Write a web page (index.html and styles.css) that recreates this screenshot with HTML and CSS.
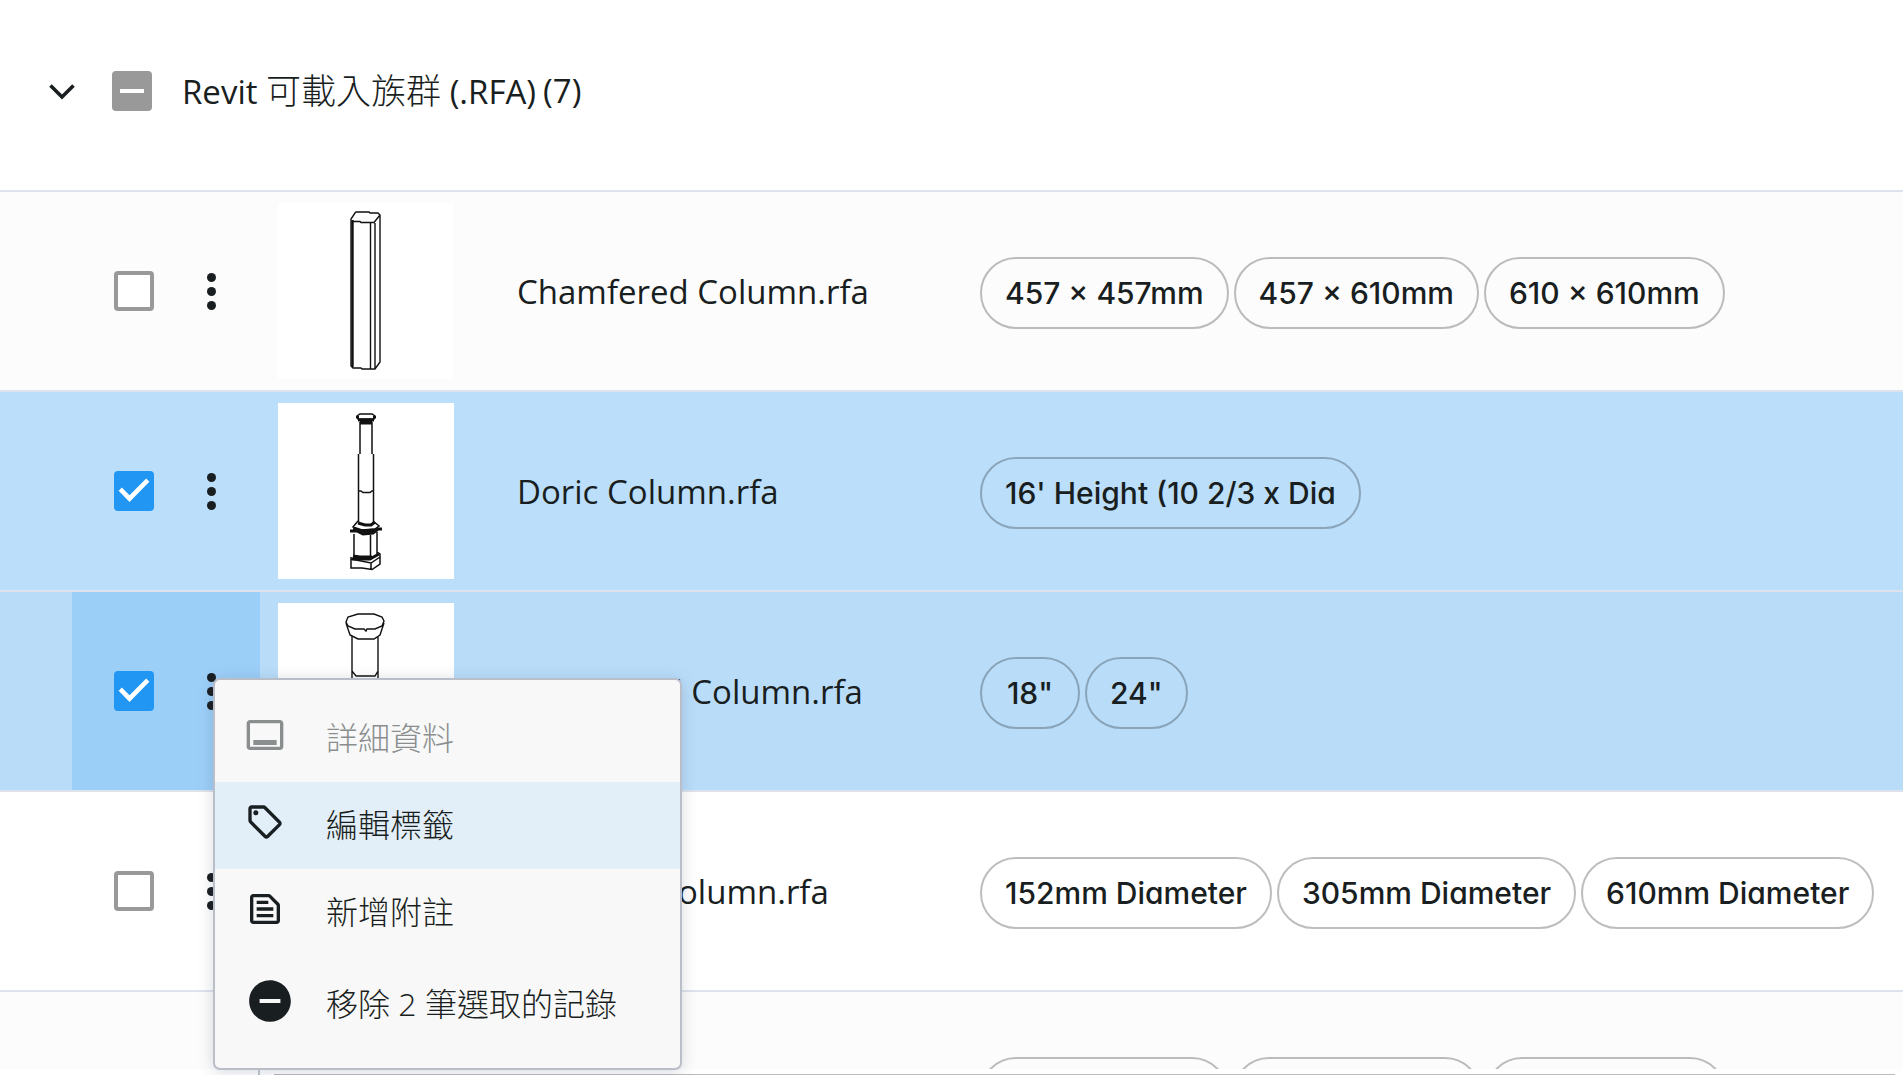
FILE: index.html
```html
<!DOCTYPE html>
<html lang="zh-Hant">
<head>
<meta charset="utf-8">
<title>Revit 可載入族群</title>
<link rel="stylesheet" href="styles.css">
</head>
<body>
<div class="page">
  <main class="list">
    <header class="group">
      <button class="toggle" type="button" aria-label="收合">
        <svg class="chevron" viewBox="0 0 50 50"><path d="M13.500 19.500 25 31 36.500 19.500" fill="none" stroke="currentColor" stroke-width="3.600"/></svg>
      </button>
      <input class="check mixed" type="checkbox" id="all">
      <label class="group-title" for="all"><span>Revit <span class="cjk">可載入族群</span> (.RFA)</span><span>(7)</span></label>
    </header>
    <table class="files">
      <colgroup><col class="c-pad"><col class="c-tools"><col class="c-thumb"><col class="c-name"><col></colgroup>
      <tbody>
        <tr class="alt">
          <td></td>
          <td><div class="tools"><input class="check" type="checkbox" aria-label="Chamfered Column.rfa"><button class="kebab" type="button" aria-label="更多"><i></i><i></i><i></i></button></div></td>
          <td><svg class="thumb" viewBox="0 0 176 176" fill="none" stroke="#111" stroke-width="1.400"><path d="M78 9H91L92 10H100L102 12V159L97 166H84L83 165H75L73 163V16L77 10ZM74 18.500H82L83 19.500H96L102 12M92.500 20V166M97 20V166"/><path d="M74.500 17V164" stroke-width="2.400"/></svg></td>
          <td class="name">Chamfered Column.rfa</td>
          <td><div class="chips"><span class="chip">457 × 457mm</span><span class="chip">457 × 610mm</span><span class="chip">610 × 610mm</span></div></td>
        </tr>
        <tr class="selected">
          <td></td>
          <td><div class="tools"><input class="check" type="checkbox" checked aria-label="Doric Column.rfa"><button class="kebab" type="button" aria-label="更多"><i></i><i></i><i></i></button></div></td>
          <td><svg class="thumb" viewBox="0 0 176 176" fill="none" stroke="#111" stroke-width="1.500"><path d="M82 11H94L97 13 96 16H80L79 13ZM81 20H95M82 21V51M94 21V51M80.500 51V119M95.500 51V119M80 88H83L85 89.500H92L94 88H96M76 131V153M92.500 132V154M99 129V151M80 118 75 124 84 127 97 126 101 123 95 118M73 154V165H84L94 166.500 102 161V151L99 149M73 156 93 160 102 154M93 160V166"/><path d="M79.500 13V15.500M96.500 13V15.500M80 17H96M82 20H94M80 120 87 122H93L97 119M72 128H79L85 131 95 130 100 126H104M75 126 84 128 97 127M75 153 82 154H94M74 156 92 156 101 151" stroke-width="3"/></svg></td>
          <td class="name">Doric Column.rfa</td>
          <td><div class="chips"><span class="chip">16' Height (10 2/3 x Dia</span></div></td>
        </tr>
        <tr class="selected hovered">
          <td></td>
          <td class="active"><div class="tools"><input class="check" type="checkbox" checked aria-label="Composed Column.rfa"><button class="kebab" type="button" aria-label="更多"><i></i><i></i><i></i></button></div></td>
          <td><svg class="thumb" viewBox="0 0 176 176" fill="none" stroke="#111" stroke-width="1.400"><path d="M80 11H96L104 14 106 18 104 23 97 26H89L88 28 86 26H77L70 23 68 19 70 14ZM68 20 72 32 80 36H96L102 32 106 20M74 33V68L78 73H97L100 68V33M74 68V80M100 68V80"/></svg></td>
          <td class="name">Composed Column.rfa</td>
          <td><div class="chips"><span class="chip">18"</span><span class="chip">24"</span></div></td>
        </tr>
        <tr>
          <td></td>
          <td><div class="tools"><input class="check" type="checkbox" aria-label="Egyptian Column.rfa"><button class="kebab" type="button" aria-label="更多"><i></i><i></i><i></i></button></div></td>
          <td></td>
          <td class="name">Egyptian Column.rfa</td>
          <td><div class="chips"><span class="chip">152mm Diameter</span><span class="chip">305mm Diameter</span><span class="chip">610mm Diameter</span></div></td>
        </tr>
        <tr class="alt">
          <td></td>
          <td></td>
          <td></td>
          <td></td>
          <td><div class="chips loading"><span class="chip"></span><span class="chip"></span><span class="chip"></span></div></td>
        </tr>
      </tbody>
    </table>
  </main>
  <footer class="foot"><div class="foot-box"></div></footer>

  <div class="menu" role="menu">
    <button class="item" type="button" role="menuitem" disabled>
      <svg class="icon" viewBox="0 0 24 24"><path d="M21 3H3c-1.100 0-2 .9-2 2v14c0 1.100.9 2 2 2h18c1.100 0 2-.9 2-2V5c0-1.100-.9-2-2-2zm0 16H3V5h18v14zM5 15h14v3H5z"/></svg>
      <span class="cjk">詳細資料</span>
    </button>
    <button class="item current" type="button" role="menuitem">
      <svg class="icon" viewBox="0 0 24 24"><path d="M21.410 11.410l-8.830-8.830c-.37-.37-.88-.58-1.410-.58H4c-1.100 0-2 .9-2 2v7.170c0 .53.21 1.040.59 1.410l8.830 8.830c.78.78 2.050.78 2.830 0l7.170-7.170c.78-.78.78-2.040-.01-2.830zM12.830 20L4 11.170V4h7.170L20 12.830 12.830 20z"/><circle cx="6.500" cy="6.500" r="1.500"/></svg>
      <span class="cjk">編輯標籤</span>
    </button>
    <button class="item" type="button" role="menuitem">
      <svg class="icon" viewBox="0 0 24 24"><path d="M14.170 5L19 9.830V19H5V5h9.170m0-2H5c-1.100 0-2 .9-2 2v14c0 1.100.9 2 2 2h14c1.100 0 2-.9 2-2V9.830c0-.53-.21-1.040-.59-1.410l-4.830-4.830c-.37-.38-.88-.59-1.410-.59zM7 15h10v2H7v-2zm0-4h10v2H7v-2zm0-4h7v2H7V7z"/></svg>
      <span class="cjk">新增附註</span>
    </button>
    <button class="item remove" type="button" role="menuitem">
      <svg class="icon" viewBox="0 0 24 24"><path d="M12 2C6.480 2 2 6.480 2 12s4.480 10 10 10 10-4.480 10-10S17.520 2 12 2zm5 11H7v-2h10v2z"/></svg>
      <span class="cjk">移除 2 筆選取的記錄</span>
    </button>
  </div>
</div>
</body>
</html>
```
FILE: styles.css
```css
* { box-sizing: border-box; }

body {
  margin: 0;
  background: #fff;
  color: #191e21;
  font-family: "Open Sans", "Noto Sans CJK TC", sans-serif;
  font-size: 33px;
}

button {
  margin: 0;
  padding: 0;
  border: 0;
  background: none;
  color: inherit;
  font: inherit;
}

.page {
  position: relative;
  display: flex;
  flex-direction: column;
  height: 100vh;
  overflow: hidden;
}

.list {
  flex: 1;
  min-height: 0;
  overflow: hidden;
}

.cjk { font-weight: 300; }

/* group heading */
.group {
  display: flex;
  align-items: center;
  height: 192px;
  padding: 0 37px 8px;
  border-bottom: 2px solid #dee2ec;
}

.toggle { display: flex; }

.chevron {
  width: 50px;
  height: 50px;
}

.group .check { margin-left: 25px; }

.group-title {
  display: flex;
  gap: 7px;
  margin-left: 30px;
  line-height: 48px;
}

.group-title .cjk { font-size: 35px; }

/* check boxes */
.check {
  flex: none;
  display: grid;
  width: 40px;
  height: 40px;
  margin: 0;
  appearance: none;
  border: 4px solid #999;
  border-radius: 4px;
  background: #fff;
}

.check.mixed {
  place-items: center;
  background: #999;
}

.check.mixed::before {
  content: "";
  width: 24px;
  height: 4px;
  background: #fff;
}

.check:checked {
  border-color: #2196f3;
  background: #2196f3;
}

.check:checked::before {
  content: "";
  background: #fff;
  clip-path: polygon(2% 49%, 12% 39%, 36% 63%, 88% 11%, 98% 21%, 36% 84%);
}

/* file rows */
.files {
  width: 100%;
  table-layout: fixed;
  border-collapse: separate;
  border-spacing: 0;
}

.c-pad { width: 72px; }
.c-tools { width: 188px; }
.c-thumb { width: 257px; }
.c-name { width: 463px; }

td {
  height: 200px;
  padding: 0;
  border-bottom: 2px solid #dee2ec;
  vertical-align: middle;
}

.alt { background: #fcfcfc; }
.selected { background: #bbdefb; }
.hovered { background: #b9ddf9; }
.active { background: #9ccff8; }

.tools {
  display: flex;
  align-items: center;
  gap: 40px;
  padding-left: 42px;
}

.kebab {
  display: flex;
  flex-direction: column;
  align-items: center;
  gap: 5px;
  width: 34px;
}

.kebab i {
  width: 9px;
  height: 9px;
  border-radius: 50%;
  background: #191e21;
}

.thumb {
  display: block;
  width: 176px;
  height: 176px;
  margin-left: 18px;
  background: #fff;
}

.name { white-space: nowrap; }

.chips {
  display: flex;
  gap: 5px;
  padding-top: 4px;
}

.chip {
  display: flex;
  flex: none;
  align-items: center;
  justify-content: center;
  min-width: 100px;
  height: 72px;
  padding: 0 23px;
  border: 2px solid rgba(0, 0, 0, 0.26);
  border-radius: 36px;
  font-family: Inter, sans-serif;
  font-size: 30px;
  font-weight: 500;
  font-feature-settings: "cv11";
}

.loading .chip { width: 248px; }
.loading .chip:last-child { width: 240px; }

/* strip below the list */
.foot {
  flex: none;
  height: 6px;
  margin-left: 258px;
  padding: 5px 8px 0 14px;
  border-left: 2px solid #c4c9d2;
}

.foot-box { border-top: 1px solid #bbb; }

/* context menu */
.menu {
  position: absolute;
  top: 678px;
  left: 213px;
  width: 469px;
  padding: 15px 0;
  border: 2px solid #b9bec9;
  border-radius: 7px;
  background: #f8f8f8;
  box-shadow: 0 2px 16px rgba(60, 70, 100, 0.2);
  font-size: 32px;
}

.item {
  display: flex;
  align-items: center;
  gap: 41px;
  width: 100%;
  height: 87px;
  padding: 0 0 2px 30px;
  line-height: 40px;
}

.item.current { background: #e2eef8; }
.item:disabled { color: #8a8e8f; }

.icon {
  flex: none;
  width: 40px;
  height: 40px;
  margin-bottom: 6px;
  fill: currentColor;
}

.item.remove {
  gap: 31px;
  height: 97px;
}

.remove .icon {
  width: 50px;
  height: 50px;
}
```
